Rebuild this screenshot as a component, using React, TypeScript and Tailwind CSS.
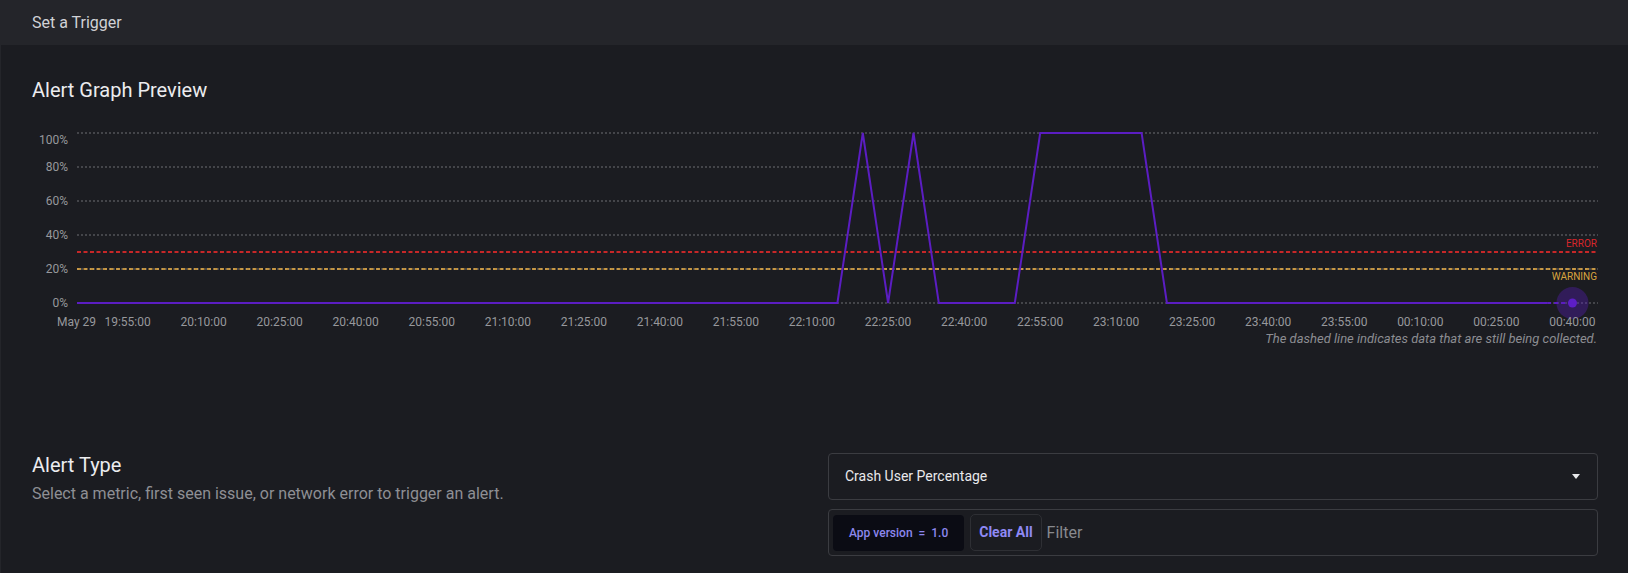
import React from 'react';

const X0 = 77;
const STEP = 25.347;
const TOP = 110;

// crash user percentage, one point every 5 minutes from 19:45 to 00:40
const values: number[] = Array.from({ length: 60 }, (_, i) => {
  if (i === 31 || i === 33) return 100;
  if (i >= 38 && i <= 42) return 100;
  return 0;
});

const px = (i: number) => X0 + i * STEP;
const py = (v: number) => 303 - v * 1.7 - TOP;

const ticks = [
  '19:55:00', '20:10:00', '20:25:00', '20:40:00', '20:55:00', '21:10:00', '21:25:00',
  '21:40:00', '21:55:00', '22:10:00', '22:25:00', '22:40:00', '22:55:00', '23:10:00',
  '23:25:00', '23:40:00', '23:55:00', '00:10:00', '00:25:00', '00:40:00',
];

const grid = [
  { label: '100%', v: 100, ty: 141 },
  { label: '80%', v: 80, ty: 168 },
  { label: '60%', v: 60, ty: 201.5 },
  { label: '40%', v: 40, ty: 235.5 },
  { label: '20%', v: 20, ty: 269.5 },
  { label: '0%', v: 0, ty: 303.5 },
];

function AlertGraph() {
  const solid = values
    .slice(0, 59)
    .map((v, i) => `${i === 0 ? 'M' : 'L'}${px(i).toFixed(1)},${py(v).toFixed(1)}`)
    .join(' ');
  const last = values.length - 1;

  return (
    <svg width={1628} height={240} className="block" style={{ fontFamily: 'Roboto, "Liberation Sans", sans-serif' }}>
      {grid.map((g) => (
        <g key={g.label}>
          <line x1={77} x2={1598} y1={py(g.v)} y2={py(g.v)} stroke="#6e6f74" strokeWidth={1} strokeDasharray="2 2" />
          <text x={68} y={g.ty - TOP} textAnchor="end" dominantBaseline="middle" fontSize={12} fill="#97989c">
            {g.label}
          </text>
        </g>
      ))}

      {/* thresholds */}
      <line x1={77} x2={1598} y1={py(30)} y2={py(30)} stroke="#ff2b2b" strokeWidth={1.6} strokeDasharray="4 2.5" />
      <line x1={77} x2={1598} y1={py(20)} y2={py(20)} stroke="#f4b548" strokeWidth={1.6} strokeDasharray="4 2.5" />
      <text x={1597} y={244 - TOP} textAnchor="end" dominantBaseline="middle" fontSize={10} fill="#d8262b">ERROR</text>
      <text x={1597} y={277.5 - TOP} textAnchor="end" dominantBaseline="middle" fontSize={10} fill="#d9a43f">WARNING</text>

      <path d={solid} fill="none" stroke="#5b1dc2" strokeWidth={2} strokeLinejoin="miter" />
      <line x1={px(last - 1)} x2={px(last)} y1={py(values[last - 1])} y2={py(values[last])} stroke="#5b1dc2" strokeWidth={2} strokeDasharray="4 3" />
      <circle cx={px(last)} cy={py(values[last])} r={16} fill="#5b1dc2" fillOpacity={0.35} />
      <circle cx={px(last)} cy={py(values[last])} r={4.5} fill="#5d1ec6" />

      <text x={57} y={323 - TOP} dominantBaseline="middle" fontSize={12} fill="#97989c">May 29</text>
      {ticks.map((t, i) => (
        <text key={t} x={127.6 + i * 76.04} y={323 - TOP} textAnchor="middle" dominantBaseline="middle" fontSize={12} fill="#97989c">
          {t}
        </text>
      ))}

      <text x={1597} y={340 - TOP} textAnchor="end" dominantBaseline="middle" fontSize={13} fontStyle="italic" fill="#8c8d92">
        The dashed line indicates data that are still being collected.
      </text>
    </svg>
  );
}

export default function App() {
  return (
    <div
      className="w-[1628px] h-[573px] overflow-hidden bg-[#1b1c21] text-white"
      style={{ fontFamily: 'Roboto, "Liberation Sans", sans-serif' }}
    >
      {/* Header */}
      <div className="h-[45px] bg-[#24252a] px-8 flex items-center">
        <span className="text-[16px] text-[#d1d2d6]">Set a Trigger</span>
      </div>

      <div className="border-l border-[#24252a] h-[528px]">
        <div className="px-[31px] pt-[33px]">
          <h2 className="text-[20px] leading-6 text-[#ececef]">Alert Graph Preview</h2>
        </div>

        <div className="-ml-px mt-[8px]">
          <AlertGraph />
        </div>

        {/* Alert type */}
        <div className="grid grid-cols-[796px_1fr] pl-[31px] pr-[30px] mt-[103px]">
          <div>
            <h3 className="text-[20px] leading-6 text-[#ececef]">Alert Type</h3>
            <p className="mt-[7px] text-[16px] leading-5 text-[#8e8f94]">
              Select a metric, first seen issue, or network error to trigger an alert.
            </p>
          </div>

          <div className="flex flex-col gap-[9px]">
            <div className="h-[47px] rounded-[4px] border border-[#3b3c41] flex items-center justify-between pl-4 pr-[17px]">
              <span className="text-[14px] text-[#e9e9ec]">Crash User Percentage</span>
              <svg width="8" height="5" viewBox="0 0 8 5">
                <path d="M0 0 L8 0 L4 5 Z" fill="#e8e8ea" />
              </svg>
            </div>
            <div className="h-[47px] rounded-[4px] border border-[#3b3c41] flex items-center pl-[4px] gap-[6px]">
              <div className="h-[36px] px-[16px] rounded-[4px] bg-[#0b0c14] flex items-center">
                <span className="text-[12px] font-medium text-[#8c87ee] whitespace-pre">App version  =  1.0</span>
              </div>
              <button className="h-[37px] px-[8px] rounded-[5px] border border-[#2e2f34] text-[14px] font-bold text-[#8f89f5]">
                Clear All
              </button>
              <span className="text-[16px] text-[#88898e] -ml-px">Filter</span>
            </div>
          </div>
        </div>
      </div>
    </div>
  );
}
